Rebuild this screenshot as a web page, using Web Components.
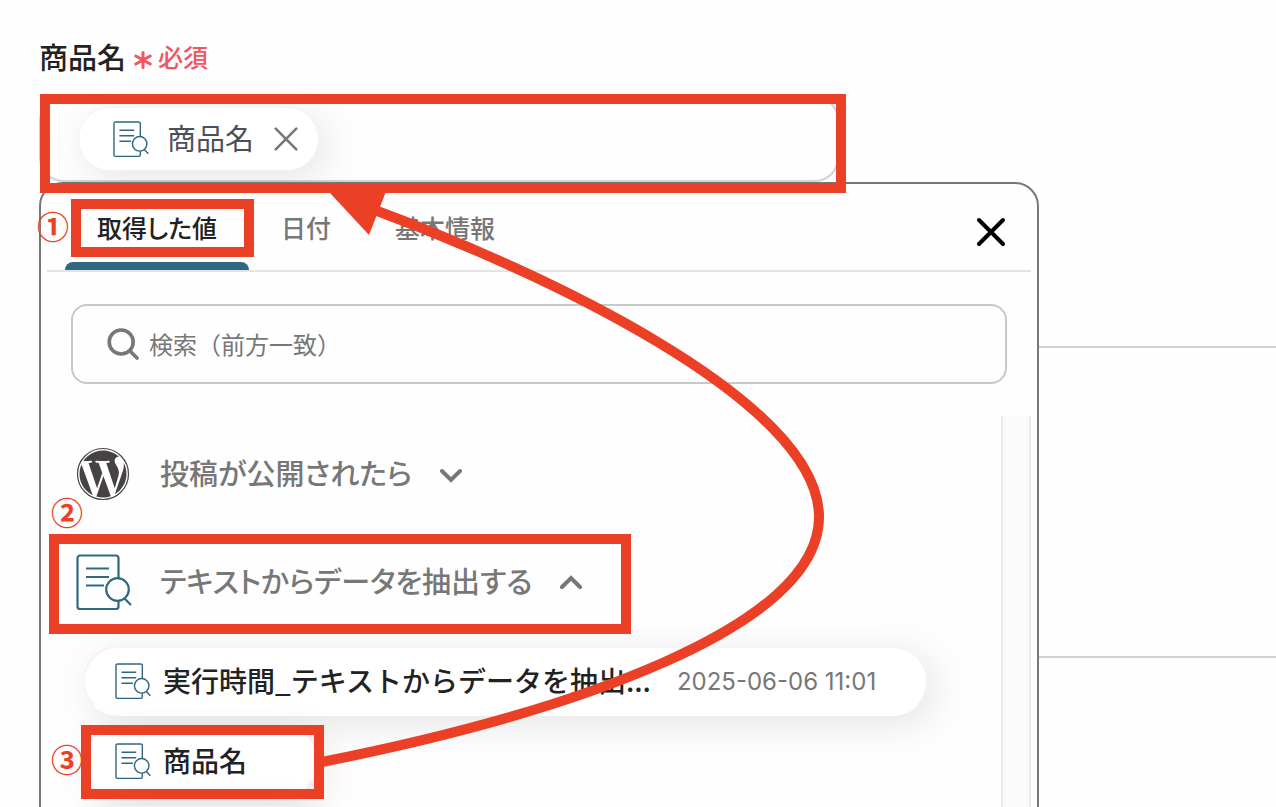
<!DOCTYPE html>
<html lang="ja">
<head>
<meta charset="utf-8">
<meta name="viewport" content="width=device-width, initial-scale=1">
<title>商品名</title>
<style>
  body {
    margin: 0;
    background: #fefefe;
    color: #222;
    font-family: "Noto Sans CJK JP", sans-serif;
  }
</style>
</head>
<body>
<mapping-page>
  <form-field label="商品名" required>
    <value-chip>商品名</value-chip>
    <value-picker slot="menu">
      <picker-tabs slot="tabs" items="取得した値,日付,基本情報"></picker-tabs>
      <picker-search slot="search" placeholder="検索（前方一致）"></picker-search>
      <source-group icon="wordpress" label="投稿が公開されたら"></source-group>
      <source-group icon="document" label="テキストからデータを抽出する" open>
        <value-option date="2025-06-06 11:01">実行時間_テキストからデータを抽出...</value-option>
        <value-option>商品名</value-option>
        <value-option></value-option>
      </source-group>
    </value-picker>
  </form-field>
  <guide-overlay slot="overlay"></guide-overlay>
</mapping-page>

<script>
/* Inline SVG markup shared by the components */
const ICONS = {
  document: `
    <svg viewBox="0 0 56 56" fill="none" stroke="#2f6880" stroke-width="2.2" aria-hidden="true">
      <path d="M42.500 24V4a2.500 2.500 0 0 0-2.500-2.500H4A2.500 2.500 0 0 0 1.500 4v48.500A2.500 2.500 0 0 0 4 55h36a2.500 2.500 0 0 0 2.500-2.500V47"/>
      <path d="M10 14.500h23M10 23h23M10 31.500h18M48.500 44.500l6.500 6.500"/>
      <circle cx="41.500" cy="35.500" r="11.300"/>
    </svg>`,
  wordpress: `
    <svg viewBox="-0.400 -0.400 24.800 24.800" fill="#464342" aria-hidden="true">
      <circle cx="12" cy="12" r="11.700" fill="#fff" stroke="#464342" stroke-width=".55"/>
      <path d="M21.469 6.825c.84 1.537 1.318 3.3 1.318 5.175 0 3.979-2.156 7.456-5.363 9.325l3.295-9.527c.615-1.54.82-2.771.82-3.864 0-.405-.026-.78-.07-1.11m-7.981.105c.647-.03 1.232-.105 1.232-.105.582-.075.514-.93-.067-.899 0 0-1.755.135-2.88.135-1.064 0-2.85-.15-2.85-.15-.585-.03-.661.855-.075.885 0 0 .54.061 1.125.09l1.68 4.605-2.37 7.08L5.354 6.9c.649-.03 1.234-.1 1.234-.1.585-.075.516-.93-.065-.896 0 0-1.746.138-2.874.138-.2 0-.438-.008-.69-.015C4.911 3.15 8.235 1.215 12 1.215c2.809 0 5.365 1.072 7.286 2.833-.046-.003-.091-.009-.141-.009-1.06 0-1.812.923-1.812 1.914 0 .89.513 1.643 1.06 2.531.411.72.89 1.643.89 2.977 0 .915-.354 1.994-.821 3.479l-1.075 3.585-3.9-11.61zM12 22.784c-1.059 0-2.081-.153-3.048-.437l3.237-9.406 3.315 9.087c.024.053.05.101.078.149-1.12.393-2.325.609-3.582.609M1.211 12c0-1.564.336-3.05.935-4.39L7.29 21.709C3.694 19.96 1.212 16.271 1.211 12"/>
    </svg>`,
  cross: `
    <svg viewBox="0 0 28 28" fill="none" stroke="currentColor" stroke-linecap="round" aria-hidden="true">
      <path d="M2 2l24 24M26 2L2 26"/>
    </svg>`,
  chevron: `
    <svg viewBox="0 0 22 22" fill="none" stroke="currentColor" stroke-width="4" stroke-linecap="round" stroke-linejoin="miter" aria-hidden="true">
      <path d="M2 7l9 9 9-9"/>
    </svg>`,
  search: `
    <svg viewBox="0 0 32 32" fill="none" stroke="currentColor" stroke-width="3.6" stroke-linecap="round" aria-hidden="true">
      <circle cx="14.200" cy="14" r="12"/>
      <path d="M23 23l7 7"/>
    </svg>`,
  asterisk: `
    <svg viewBox="0 0 18 18" fill="none" stroke="currentColor" stroke-width="3" stroke-linecap="round" aria-hidden="true">
      <path d="M9 1.500v15M1.800 5l14.400 8M16.200 5L1.800 13"/>
    </svg>`
};

const BASE_STYLES = `
  *, *::before { box-sizing: border-box; }
  svg { display: block; flex: none; }
  button {
    margin: 0;
    padding: 0;
    border: 0;
    background: none;
    color: inherit;
    font: inherit;
    text-align: left;
    cursor: pointer;
  }
`;

class BaseElement extends HTMLElement {
  constructor() {
    super();
    this.attachShadow({ mode: 'open' });
  }

  connectedCallback() {
    this.shadowRoot.innerHTML = `<style>${BASE_STYLES}${this.styles()}</style>${this.markup()}`;
  }
}

/** Page frame: the current field, with the outlines of the sections below it */
class MappingPage extends BaseElement {
  styles() {
    return `
      :host {
        display: block;
        position: relative;
        height: 100vh;
        overflow: hidden;
      }
      main { padding: 36px 0 0 39px; }
      .section {
        height: 310px;
        border-top: 2px solid #cdd0d8;
      }
      .section:first-of-type { margin-top: 164px; }
    `;
  }

  markup() {
    return `
      <main>
        <slot></slot>
        <div class="section"></div>
        <div class="section"></div>
      </main>
      <slot name="overlay"></slot>
    `;
  }
}

/** Labelled field, with a menu that opens under its box */
class FormField extends BaseElement {
  styles() {
    return `
      :host { display: block; }
      .label {
        display: flex;
        align-items: center;
        gap: 8px;
        height: 40px;
        margin-bottom: 20px;
        font-size: 29px;
        font-weight: 500;
        line-height: 40px;
      }
      .required {
        display: flex;
        align-items: center;
        gap: 6px;
        color: #f0565f;
        font-size: 25px;
      }
      .required svg { width: 18px; height: 18px; margin-top: 8px; }
      .anchor { position: relative; }
      .box {
        display: flex;
        align-items: center;
        max-width: 800px;
        height: 86px;
        padding: 0 37px;
        border: 2px solid #ced3d9;
        border-radius: 24px;
      }
      .menu {
        position: absolute;
        top: 100%;
        left: 0;
        width: 100%;
        max-width: 1000px;
      }
    `;
  }

  markup() {
    const required = this.hasAttribute('required')
      ? `<span class="required">${ICONS.asterisk}必須</span>`
      : '';
    return `
      <div class="label"><span id="label">${this.getAttribute('label')}</span>${required}</div>
      <div class="anchor">
        <div class="box" role="group" aria-labelledby="label"><slot></slot></div>
        <div class="menu"><slot name="menu"></slot></div>
      </div>
    `;
  }
}

/** Value that has been put in the field */
class ValueChip extends BaseElement {
  styles() {
    return `
      :host {
        display: flex;
        align-items: center;
        height: 62px;
        padding: 0 20px 0 34px;
        border: 1px solid #f3f3f3;
        border-radius: 32px;
        background: #fff;
        box-shadow: 8px 8px 40px rgba(0, 0, 0, .1);
        color: #4b5058;
        font-size: 29px;
        line-height: 40px;
      }
      .icon svg { width: 36px; height: 36px; }
      .text { margin: 0 20px 0 18px; padding-bottom: 4px; }
      button { color: #777; }
      button svg { width: 24px; height: 24px; stroke-width: 3; }
    `;
  }

  markup() {
    return `
      <span class="icon">${ICONS.document}</span>
      <span class="text"><slot></slot></span>
      <button type="button" aria-label="削除">${ICONS.cross}</button>
    `;
  }
}

/** Drop-down panel: tabs, search and the list of sources */
class ValuePicker extends BaseElement {
  styles() {
    return `
      :host {
        display: block;
        padding: 0 6px;
        border: 2px solid #777;
        border-radius: 24px 24px 0 0;
        background: #fefefe;
      }
      .search { padding: 32px 24px; }
      .body { display: flex; }
      .list { flex: 1; min-width: 0; padding-top: 4px; }
      .track {
        width: 30px;
        border: solid #e8e8e8;
        border-width: 0 2px;
        background: #fafafa;
      }
    `;
  }

  markup() {
    return `
      <slot name="tabs"></slot>
      <div class="search"><slot name="search"></slot></div>
      <div class="body">
        <div class="list"><slot></slot></div>
        <div class="track"></div>
      </div>
    `;
  }
}

class PickerTabs extends BaseElement {
  styles() {
    return `
      :host {
        display: flex;
        justify-content: space-between;
        padding: 0 26px 0 18px;
        border-bottom: 2px solid #e3e3e3;
      }
      .tabs { display: flex; }
      .tab {
        position: relative;
        height: 86px;
        padding: 6px 32px;
        color: #777;
        font-size: 25px;
        font-weight: 500;
        line-height: 32px;
        font-feature-settings: "palt";
      }
      .tab[aria-selected="true"] { color: #222; }
      .tab[aria-selected="true"]::before {
        content: "";
        position: absolute;
        inset: auto 0 0;
        height: 8px;
        border-radius: 8px 8px 0 0;
        background: #2f6880;
      }
      .close { color: #000; }
      .close svg { width: 28px; height: 28px; margin-top: 10px; stroke-width: 4; overflow: visible; }
    `;
  }

  markup() {
    const tabs = this.getAttribute('items').split(',').map((name, i) => `
      <button class="tab" type="button" role="tab" aria-selected="${i === 0}">${name}</button>
    `).join('');
    return `
      <div class="tabs" role="tablist">${tabs}</div>
      <button class="close" type="button" aria-label="閉じる">${ICONS.cross}</button>
    `;
  }
}

class PickerSearch extends BaseElement {
  styles() {
    return `
      :host { display: block; }
      label {
        display: flex;
        align-items: center;
        gap: 10px;
        height: 80px;
        padding: 0 34px;
        border: 2px solid #c8c8c8;
        border-radius: 16px;
        color: #777;
      }
      label svg { width: 32px; height: 32px; }
      input {
        flex: 1;
        min-width: 0;
        padding: 0;
        border: 0;
        outline: 0;
        background: none;
        color: #222;
        font: inherit;
        font-size: 24px;
        line-height: 36px;
      }
      input::placeholder { color: #777; opacity: 1; }
    `;
  }

  markup() {
    const placeholder = this.getAttribute('placeholder');
    return `
      <label>
        ${ICONS.search}
        <input type="search" placeholder="${placeholder}" aria-label="${placeholder}">
      </label>
    `;
  }
}

/** One source step; its values are listed while it is open */
class SourceGroup extends BaseElement {
  styles() {
    return `
      :host { display: block; }
      .head {
        display: flex;
        align-items: center;
        gap: 28px;
        width: 100%;
        height: 108px;
        padding: 0 29px;
        color: #777;
        font-size: 29px;
        font-weight: 500;
        line-height: 40px;
        font-feature-settings: "palt";
      }
      .icon svg { width: 56px; height: 56px; }
      .icon.wordpress svg { padding: 1px 2px 1px 0; }
      .text { padding-bottom: 4px; }
      .chevron svg { width: 22px; height: 22px; margin-top: 2px; }
      :host([open]) .chevron svg { transform: rotate(180deg); }
      .values {
        display: flex;
        flex-direction: column;
        align-items: flex-start;
        gap: 10px;
        padding: 10px 72px 0 36px;
      }
      :host(:not([open])) .values { display: none; }
    `;
  }

  connectedCallback() {
    super.connectedCallback();
    const head = this.shadowRoot.querySelector('.head');
    head.addEventListener('click', () => {
      head.setAttribute('aria-expanded', this.toggleAttribute('open'));
    });
  }

  markup() {
    const icon = this.getAttribute('icon');
    return `
      <button class="head" type="button" aria-expanded="${this.hasAttribute('open')}">
        <span class="icon ${icon}">${ICONS[icon]}</span>
        <span class="text">${this.getAttribute('label')}</span>
        <span class="chevron">${ICONS.chevron}</span>
      </button>
      <div class="values"><slot></slot></div>
    `;
  }
}

class ValueOption extends BaseElement {
  styles() {
    return `
      :host { display: block; max-width: 100%; }
      button {
        display: flex;
        align-items: center;
        gap: 12px;
        min-width: 236px;
        height: 70px;
        padding: 0 50px 0 30px;
        border: 2px solid #f4f4f4;
        border-bottom-color: #fff;
        border-radius: 36px;
        background: #fff;
        box-shadow: 8px 8px 40px rgba(0, 0, 0, .1);
        font-size: 28px;
        font-weight: 500;
        line-height: 40px;
        white-space: nowrap;
      }
      svg { width: 36px; height: 36px; }
      .text { padding-bottom: 3px; }
      time {
        margin-left: 14px;
        padding-top: 2px;
        color: #777;
        font-family: Inter, sans-serif;
        font-size: 24px;
        font-weight: 400;
      }
    `;
  }

  markup() {
    const date = this.getAttribute('date');
    return `
      <button type="button">
        ${ICONS.document}
        <span class="text"><slot></slot></span>
        ${date ? `<time>${date}</time>` : ''}
      </button>
    `;
  }
}

/** Numbered walkthrough marks drawn over the form */
class GuideOverlay extends BaseElement {
  styles() {
    return `
      :host {
        position: absolute;
        top: 0;
        left: 0;
        pointer-events: none;
      }
      .frame, .path { fill: none; stroke: #eb4026; stroke-width: 10; }
      .head { fill: #eb4026; }
      text {
        fill: #eb4026;
        font-size: 32px;
        font-weight: 700;
        text-anchor: middle;
      }
    `;
  }

  markup() {
    return `
      <svg width="1276" height="807" viewBox="0 0 1276 807">
        <rect class="frame" x="45" y="99" width="796" height="89"/>
        <rect class="frame" x="76" y="204" width="173" height="48"/>
        <rect class="frame" x="54" y="539" width="572" height="90"/>
        <rect class="frame" x="86" y="730" width="233" height="64"/>
        <path class="path" d="M322 762C573 712 819 627 819 517C819 400 538 270 372 209"/>
        <path class="head" d="M330 193L387 189L369 235Z"/>
        <text x="53" y="239">①</text>
        <text x="67" y="525">②</text>
        <text x="67" y="772">③</text>
      </svg>
    `;
  }
}

customElements.define('mapping-page', MappingPage);
customElements.define('form-field', FormField);
customElements.define('value-chip', ValueChip);
customElements.define('value-picker', ValuePicker);
customElements.define('picker-tabs', PickerTabs);
customElements.define('picker-search', PickerSearch);
customElements.define('source-group', SourceGroup);
customElements.define('value-option', ValueOption);
customElements.define('guide-overlay', GuideOverlay);
</script>
</body>
</html>
